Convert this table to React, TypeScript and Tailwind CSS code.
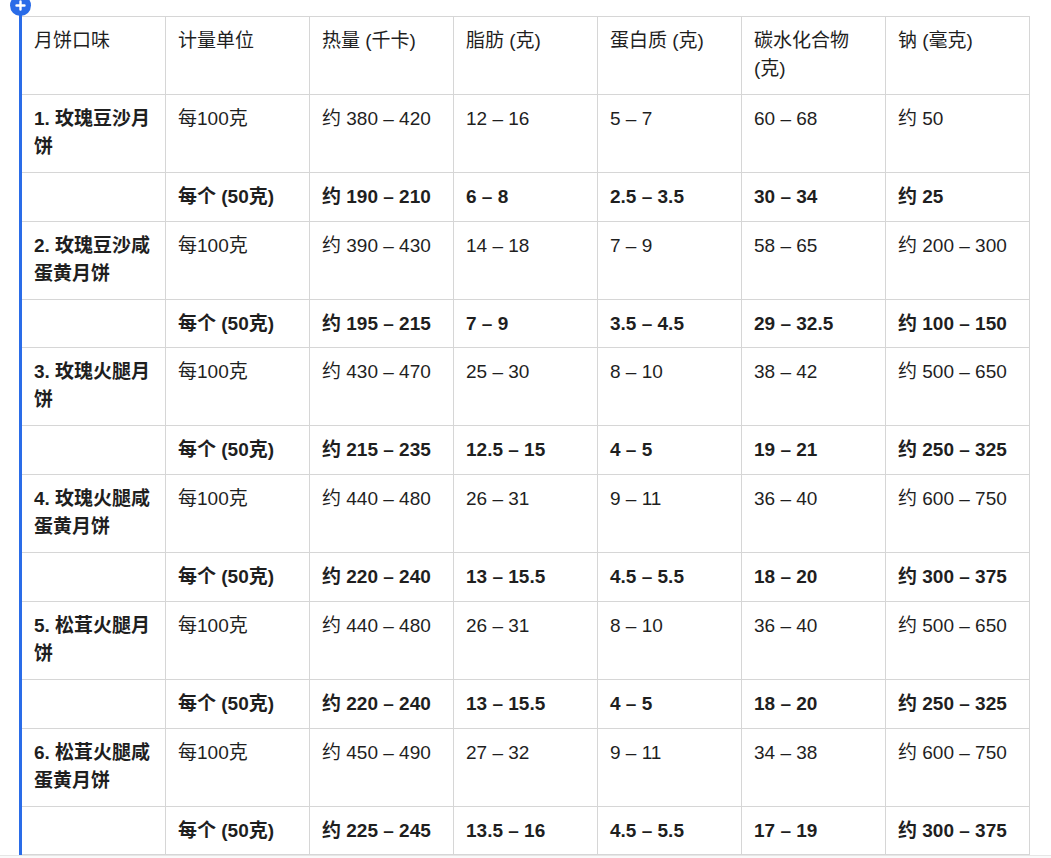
import React from "react";

type Item = {
  name: string;
  main: string[];
  sub: string[];
  subH: string;
};

const items: Item[] = [
  { name: "1. 玫瑰豆沙月饼", subH: "h-[49px]", main: ["每100克", "约 380 – 420", "12 – 16", "5 – 7", "60 – 68", "约 50"], sub: ["每个 (50克)", "约 190 – 210", "6 – 8", "2.5 – 3.5", "30 – 34", "约 25"] },
  { name: "2. 玫瑰豆沙咸蛋黄月饼", subH: "h-[48px]", main: ["每100克", "约 390 – 430", "14 – 18", "7 – 9", "58 – 65", "约 200 – 300"], sub: ["每个 (50克)", "约 195 – 215", "7 – 9", "3.5 – 4.5", "29 – 32.5", "约 100 – 150"] },
  { name: "3. 玫瑰火腿月饼", subH: "h-[49px]", main: ["每100克", "约 430 – 470", "25 – 30", "8 – 10", "38 – 42", "约 500 – 650"], sub: ["每个 (50克)", "约 215 – 235", "12.5 – 15", "4 – 5", "19 – 21", "约 250 – 325"] },
  { name: "4. 玫瑰火腿咸蛋黄月饼", subH: "h-[49px]", main: ["每100克", "约 440 – 480", "26 – 31", "9 – 11", "36 – 40", "约 600 – 750"], sub: ["每个 (50克)", "约 220 – 240", "13 – 15.5", "4.5 – 5.5", "18 – 20", "约 300 – 375"] },
  { name: "5. 松茸火腿月饼", subH: "h-[49px]", main: ["每100克", "约 440 – 480", "26 – 31", "8 – 10", "36 – 40", "约 500 – 650"], sub: ["每个 (50克)", "约 220 – 240", "13 – 15.5", "4 – 5", "18 – 20", "约 250 – 325"] },
  { name: "6. 松茸火腿咸蛋黄月饼", subH: "h-[48px]", main: ["每100克", "约 450 – 490", "27 – 32", "9 – 11", "34 – 38", "约 600 – 750"], sub: ["每个 (50克)", "约 225 – 245", "13.5 – 16", "4.5 – 5.5", "17 – 19", "约 300 – 375"] },
];

const headers = ["月饼口味", "计量单位", "热量 (千卡)", "脂肪 (克)", "蛋白质 (克)", "碳水化合物 (克)", "钠 (毫克)"];

const base = "border border-[#d6d6d6] px-[12px] pt-[10px] align-top text-left";

export default function App() {
  return (
    <div
      className="relative w-[1051px] h-[858px] bg-white overflow-hidden text-[#1f1f1f]"
      style={{ fontFamily: '"Liberation Sans", Arial, "Noto Sans CJK SC", sans-serif' }}
    >
      <div className="pl-[21px] pt-[16px]">
        <table className="table-fixed border-collapse w-[1008px] text-[19px] leading-[28px]">
          <colgroup>
            {headers.map((_, i) => (
              <col key={i} className="w-[144px]" />
            ))}
          </colgroup>
          <thead>
            <tr className="h-[78px]">
              {headers.map((h) => (
                <th key={h} className={`${base} pb-[8px] font-normal`}>
                  {h}
                </th>
              ))}
            </tr>
          </thead>
          <tbody>
            {items.map((it) => (
              <React.Fragment key={it.name}>
                <tr className="h-[78px]">
                  <td className={`${base} pb-[8px] font-bold`}>{it.name}</td>
                  {it.main.map((v, i) => (
                    <td key={i} className={`${base} pb-[8px]`}>
                      {v}
                    </td>
                  ))}
                </tr>
                <tr className={it.subH}>
                  <td className={`${base} pb-[8px]`}></td>
                  {it.sub.map((v, i) => (
                    <td key={i} className={`${base} pb-[8px] font-bold`}>
                      {v}
                    </td>
                  ))}
                </tr>
              </React.Fragment>
            ))}
          </tbody>
        </table>
      </div>
      <div className="absolute left-0 right-0 top-[855px] h-[3px] border-t border-[#e6e6e6] bg-[#fafafa]" />
      <div className="absolute left-[19px] top-[4px] w-[3px] h-[851px] bg-[#2a6ce8]" />
      <div className="absolute left-[10px] top-[-5px] w-[21px] h-[21px] rounded-full bg-[#2a6ce8] flex items-center justify-center">
        <svg width="11" height="11" viewBox="0 0 11 11">
          <path d="M5.5 1.5v8M1.5 5.5h8" stroke="white" strokeWidth="2.4" strokeLinecap="round" />
        </svg>
      </div>
    </div>
  );
}
